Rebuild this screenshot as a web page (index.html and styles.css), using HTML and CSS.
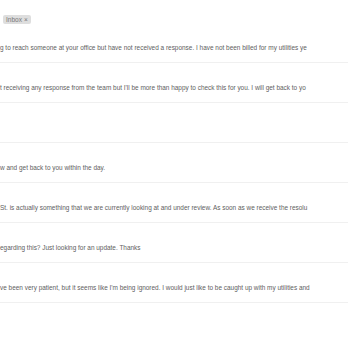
FILE: index.html
```html
<!DOCTYPE html>
<html>
<head>
<meta charset="utf-8">
<link rel="stylesheet" href="styles.css">
</head>
<body>
<div class="page">
  <div class="header">
    <span class="badge">Inbox <span class="x">×</span></span>
  </div>
  <ul class="list">
    <li class="row"><span class="text">g to reach someone at your office but have not received a response. I have not been billed for my utilities ye</span></li>
    <li class="row"><span class="text">t receiving any response from the team but I'll be more than happy to check this for you. I will get back to yo</span></li>
    <li class="row"><span class="text"></span></li>
    <li class="row"><span class="text">w and get back to you within the day.</span></li>
    <li class="row"><span class="text">St. is actually something that we are currently looking at and under review. As soon as we receive the resolu</span></li>
    <li class="row"><span class="text">egarding this? Just looking for an update. Thanks</span></li>
    <li class="row"><span class="text">ve been very patient, but it seems like I'm being ignored. I would just like to be caught up with my utilities and</span></li>
    <li class="row last"><span class="text"></span></li>
  </ul>
</div>
</body>
</html>
```
FILE: styles.css
```css
html, body {
  margin: 0;
  padding: 0;
  background: #fff;
}
body {
  font-family: "Liberation Sans", Arial, sans-serif;
  color: #666;
  width: 348px;
  height: 348px;
  overflow: hidden;
}
.header {
  height: 23px;
  box-sizing: border-box;
  padding: 8px 0 0 3px;
}
.badge {
  display: inline-flex;
  align-items: center;
  gap: 2px;
  height: 9px;
  padding: 0 3px;
  background: #dedede;
  border-radius: 2px;
  font-size: 6.5px;
  line-height: 9px;
  color: #777;
}
.badge .x {
  font-size: 6.5px;
}
.list {
  list-style: none;
  margin: 0;
  padding: 0;
}
.row {
  height: 40px;
  box-sizing: border-box;
  border-bottom: 1px solid #f0f0f0;
  padding-top: 21px;
}
.row.last {
  border-bottom: none;
}
.text {
  display: block;
  font-size: 6.45px;
  line-height: 8px;
  white-space: nowrap;
  color: #606060;
}
```
